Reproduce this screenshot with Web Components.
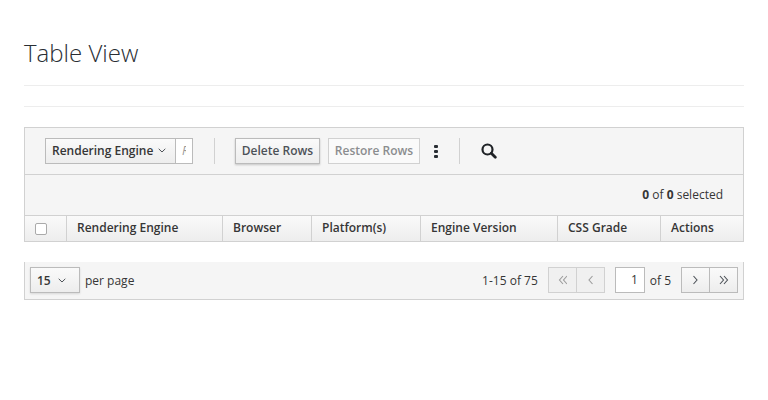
<!DOCTYPE html>
<html>
<head>
<meta charset="utf-8">
<title>Table View</title>
<style>
  html, body { margin: 0; background: #fff; }
  body { font-family: "Open Sans", "Liberation Sans", sans-serif; font-size: 12px; color: #363636; }
</style>
</head>
<body>
<table-page>
  <page-title>Table View</page-title>
  <table-toolbar></table-toolbar>
  <data-head></data-head>
  <table-pager></table-pager>
</table-page>

<script>
const chevronDown = `<svg width="8" height="5" viewBox="0 0 8 5"><path d="M.7.8 4 4 7.3.8" fill="none" stroke="#4d5258" stroke-width="1"/></svg>`;

class TablePage extends HTMLElement {
  constructor() {
    super();
    this.attachShadow({ mode: "open" }).innerHTML = `
      <style>
        :host { display: block; padding: 0 24px; height: 400px; box-sizing: border-box; }
      </style>
      <slot></slot>`;
  }
}

class PageTitle extends HTMLElement {
  constructor() {
    super();
    this.attachShadow({ mode: "open" }).innerHTML = `
      <style>
        :host { display: block; padding-top: 36px; }
        h1 { margin: 0; font-size: 24px; font-weight: 300; line-height: 33px; color: #292e34; }
        .rule { height: 1px; background: #ededed; }
        .first { margin-top: 16px; }
        .second { margin-top: 20px; margin-bottom: 20px; }
      </style>
      <h1><slot></slot></h1>
      <div class="rule first"></div>
      <div class="rule second"></div>`;
  }
}

class TableToolbar extends HTMLElement {
  constructor() {
    super();
    this.attachShadow({ mode: "open" }).innerHTML = `
      <style>
        :host { display: block; background: #f5f5f5; border: 1px solid #d1d1d1; border-bottom: 0; color: #363636; }
        .actions { display: flex; align-items: center; height: 46px; padding-left: 20px; border-bottom: 1px solid #d1d1d1; }
        .filter { display: flex; height: 26px; box-sizing: border-box; border: 1px solid #bbb; background: #fff; width: 148px; }
        .filter .field { display: flex; align-items: center; gap: 5px; width: 130px; box-sizing: border-box; padding: 0 0 2px 6px; font-weight: 600; background: linear-gradient(#fafafa, #ededed); border-right: 1px solid #bbb; }
        .filter i { font-size: 12px; color: #999; padding: 4px 0 0 6px; line-height: 16px; overflow: hidden; width: 4px; }
        .sep { width: 1px; height: 26px; background: #d1d1d1; }
        .sep.a { margin: 0 20px 0 21px; }
        .sep.b { margin: 0 21px 0 21px; }
        button { font: inherit; font-weight: 600; height: 26px; padding: 0 0 2px; box-sizing: border-box; }
        .del { width: 85px; border: 1px solid #bbb; background: linear-gradient(#fafafa, #ededed); color: #4d5258; box-shadow: 0 1px 2px rgba(3,3,3,.2); }
        .res { width: 92px; margin-left: 8px; border: 1px solid #d1d1d1; background: #fafafa; color: #8b8d8f; }
        .kebab { margin-left: 14px; display: flex; flex-direction: column; gap: 2px; width: 4px; }
        .kebab b { width: 4px; height: 3px; background: #292e34; border-radius: 1px; }
        .search { display: block; }
        .count { display: flex; justify-content: flex-end; align-items: center; height: 39px; padding: 0 20px 1px 0; }
        .count b { font-weight: 700; }
        .count span { white-space: pre; }
      </style>
      <div class="actions">
        <div class="filter">
          <div class="field">Rendering Engine ${chevronDown}</div>
          <i>R</i>
        </div>
        <div class="sep a"></div>
        <button class="del">Delete Rows</button>
        <button class="res">Restore Rows</button>
        <div class="kebab"><b></b><b></b><b></b></div>
        <div class="sep b"></div>
        <svg class="search" width="16" height="16" viewBox="0 0 16 16"><circle cx="6.500" cy="6.500" r="5" fill="none" stroke="#1f2226" stroke-width="2.200"/><path d="M10.300 10.300 14.300 14.300" stroke="#1f2226" stroke-width="2.800" stroke-linecap="round"/></svg>
      </div>
      <div class="count"><span><b>0</b> of <b>0</b> selected</span></div>`;
  }
}

class DataHead extends HTMLElement {
  constructor() {
    super();
    const cols = [
      ["Rendering Engine", 156],
      ["Browser", 89],
      ["Platform(s)", 109],
      ["Engine Version", 137],
      ["CSS Grade", 103],
      ["Actions", 82]
    ];
    this.attachShadow({ mode: "open" }).innerHTML = `
      <style>
        :host { display: flex; height: 27px; box-sizing: border-box; border: 1px solid #d1d1d1; background: linear-gradient(#fafafa, #ededed); font-weight: 600; color: #363636; }
        .check { flex: 0 0 42px; box-sizing: border-box; display: flex; align-items: center; padding-left: 10px; border-right: 1px solid #d1d1d1; }
        .check span { width: 12px; height: 12px; box-sizing: border-box; border: 1px solid #aaa; border-radius: 2px; background: #fff; }
        .col { box-sizing: border-box; display: flex; align-items: center; padding: 0 0 2px 10px; border-right: 1px solid #d1d1d1; }
        .col:last-child { border-right: 0; }
      </style>
      <div class="check"><span></span></div>
      ${cols.map(c => `<div class="col" style="flex:0 0 ${c[1]}px">${c[0]}</div>`).join("")}`;
  }
}

class TablePager extends HTMLElement {
  constructor() {
    super();
    this.attachShadow({ mode: "open" }).innerHTML = `
      <style>
        :host { display: flex; align-items: center; height: 38px; margin-top: 20px; box-sizing: border-box; background: #f5f5f5; border-bottom: 1px solid #d1d1d1; border-left: 1px solid #d1d1d1; border-right: 1px solid #d1d1d1; padding: 0 5px 1px; color: #363636; }
        .size { display: flex; align-items: center; gap: 7px; width: 50px; height: 26px; box-sizing: border-box; padding-left: 6px; border: 1px solid #bbb; background: linear-gradient(#fafafa, #ededed); box-shadow: 0 1px 2px rgba(3,3,3,.12); font-weight: 600; }
        .per { margin-left: 5px; }
        .range { margin-left: auto; }
        .group { display: flex; height: 26px; box-sizing: border-box; border: 1px solid #bbb; background: linear-gradient(#fafafa, #ededed); }
        .group.off { border-color: #d1d1d1; background: #f0f0f0; margin-left: 10px; }
        .group div { width: 27px; display: flex; align-items: center; justify-content: center; }
        .group div + div { border-left: 1px solid #bbb; }
        .group.off div + div { border-left-color: #d1d1d1; }
        .page { width: 30px; height: 26px; box-sizing: border-box; border: 1px solid #bbb; background: #fff; margin-left: 10px; text-align: right; padding: 4px 6px 0 0; line-height: 16px; }
        .of { margin: 0 10px 0 5px; }
        svg { display: block; }
      </style>
      <div class="size">15 ${chevronDown}</div>
      <span class="per">per page</span>
      <span class="range">1-15 of 75</span>
      <div class="group off">
        <div>${this.arrows("M6 1 2.500 5 6 9M10 1 6.500 5 10 9", "#9c9c9c")}</div>
        <div>${this.arrows("M7.500 1 4 5 7.500 9", "#9c9c9c")}</div>
      </div>
      <div class="page">1</div>
      <span class="of">of 5</span>
      <div class="group">
        <div>${this.arrows("M2.500 1 6 5 2.500 9", "#4d5258")}</div>
        <div>${this.arrows("M1 1 4.500 5 1 9M5 1 8.500 5 5 9", "#4d5258")}</div>
      </div>`;
  }

  arrows(d, color) {
    return `<svg width="10" height="10" viewBox="0 0 10 10"><path d="${d}" fill="none" stroke="${color}" stroke-width="1.100"/></svg>`;
  }
}

customElements.define("table-page", TablePage);
customElements.define("page-title", PageTitle);
customElements.define("table-toolbar", TableToolbar);
customElements.define("data-head", DataHead);
customElements.define("table-pager", TablePager);
</script>
</body>
</html>
